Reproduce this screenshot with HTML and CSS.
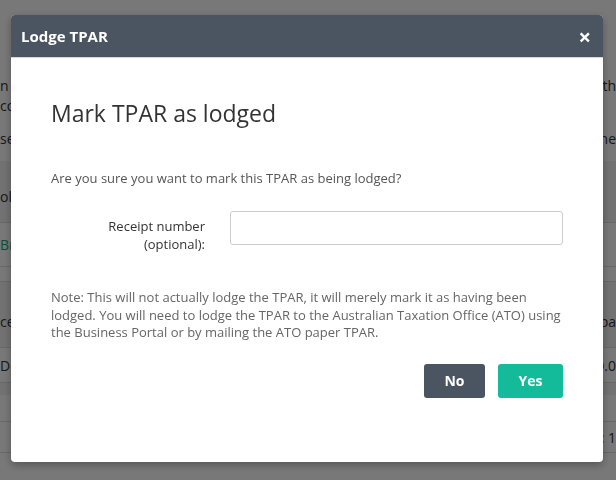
FILE: index.html
```html
<!DOCTYPE html>
<html lang="en">
<head>
<meta charset="UTF-8">
<meta name="viewport" content="width=device-width, initial-scale=1.0">
<title>Lodge TPAR</title>
<link rel="stylesheet" href="styles.css">
</head>
<body>
    <!-- page behind the dialog -->
    <div class="page">
        <div class="line line-1"><span>n 1</span><span>th</span></div>
        <div class="line line-2"><span>co</span><span></span></div>
        <div class="line line-3"><span>se</span><span>ne</span></div>
        <div class="band band-head"><span>oli</span><span></span></div>
        <div class="row row-link"><span class="link">Br</span><span></span></div>
        <div class="row row-thin"></div>
        <div class="band band-head2"><span>ce</span><span>pa</span></div>
        <div class="row row-doc"><span>Do</span><span>0.0</span></div>
        <div class="band band-thin"></div>
        <div class="row row-empty"></div>
        <div class="row row-total"><span></span><span>: 1</span></div>
    </div>

    <div class="backdrop"></div>

    <div class="modal">
        <div class="modal-header">
            <span class="modal-title">Lodge TPAR</span>
            <span class="modal-close">&times;</span>
        </div>
        <div class="modal-body">
            <h1>Mark TPAR as lodged</h1>
            <p class="question">Are you sure you want to mark this TPAR as being lodged?</p>
            <div class="form-row">
                <label for="receipt">Receipt number<br>(optional):</label>
                <input type="text" id="receipt" name="receipt">
            </div>
            <p class="note">Note: This will not actually lodge the TPAR, it will merely mark it as having been lodged. You will need to lodge the TPAR to the Australian Taxation Office (ATO) using the Business Portal or by mailing the ATO paper TPAR.</p>
            <div class="actions">
                <button type="button" class="btn btn-no">No</button>
                <button type="button" class="btn btn-yes">Yes</button>
            </div>
        </div>
    </div>
</body>
</html>
```
FILE: styles.css
```css
body {
    margin: 0;
    font-family: "Open Sans", "Liberation Sans", sans-serif;
    background: #fff;
    color: #333;
    overflow: hidden;
}
.page {
    padding-top: 74px;
    font-size: 14px;
}
.line, .band, .row {
    display: flex;
    justify-content: space-between;
    align-items: center;
    white-space: nowrap;
    overflow: hidden;
}
.line-1 { height: 22px; }
.line-2 { height: 18px; margin-bottom: 15px; }
.line-3 { height: 18px; margin-bottom: 14px; }
.band {
    background: #f2f2f2;
}
.band-head {
    height: 62px;
    align-items: flex-end;
    padding-bottom: 16px;
    box-sizing: border-box;
    border-bottom: 1px solid #ddd;
}
.row {
    border-bottom: 1px solid #ddd;
}
.row-link { height: 43px; }
.link { color: #1aa38a; }
.row-thin { height: 14px; }
.band-head2 {
    height: 66px;
    border-bottom: 1px solid #ddd;
    padding-top: 14px;
    box-sizing: border-box;
}
.row-doc { height: 34px; }
.band-thin { height: 12px; }
.row-empty { height: 26px; }
.row-total { height: 30px; }

.backdrop {
    position: fixed;
    inset: 0;
    background: rgba(0, 0, 0, 0.53);
}
.modal {
    position: fixed;
    left: 11px;
    top: 15px;
    width: 592px;
    height: 447px;
    background: #fff;
    border-radius: 4px;
    overflow: hidden;
    box-shadow: 0 3px 9px rgba(0, 0, 0, 0.3);
}
.modal-header {
    height: 42px;
    background: #4a5561;
    border-bottom: 1px solid #d5d9dd;
    display: flex;
    align-items: center;
    justify-content: space-between;
    padding: 0 12px 0 10px;
    color: #fff;
}
.modal-title {
    font-size: 15px;
    font-weight: 700;
}
.modal-close {
    font-size: 22px;
    font-weight: 700;
    line-height: 1;
}
.modal-body {
    padding: 40px 40px 0 40px;
}
h1 {
    margin: 0;
    font-size: 23px;
    font-weight: 400;
    color: #333;
    line-height: 30px;
}
.question {
    margin: 41px 0 0 0;
    font-size: 13px;
    line-height: 18px;
    color: #555;
}
.form-row {
    display: flex;
    align-items: flex-start;
    margin-top: 24px;
}
label {
    width: 154px;
    text-align: right;
    font-size: 13px;
    line-height: 18px;
    color: #333;
    padding-top: 6px;
}
input {
    margin-left: 25px;
    width: 333px;
    height: 34px;
    box-sizing: border-box;
    border: 1px solid #ccc;
    border-radius: 3px;
    padding: 6px 10px;
    font-size: 13px;
}
.note {
    margin: 36px 0 0 0;
    font-size: 13px;
    line-height: 17.5px;
    color: #666;
}
.actions {
    display: flex;
    justify-content: flex-end;
    gap: 13px;
    margin-top: 22px;
}
.btn {
    height: 34px;
    border: none;
    border-radius: 3px;
    color: #fff;
    font-family: inherit;
    font-size: 14px;
    font-weight: 700;
    cursor: pointer;
}
.btn-no {
    width: 61px;
    background: #4a5561;
}
.btn-yes {
    width: 65px;
    background: #14bb9b;
}
```
